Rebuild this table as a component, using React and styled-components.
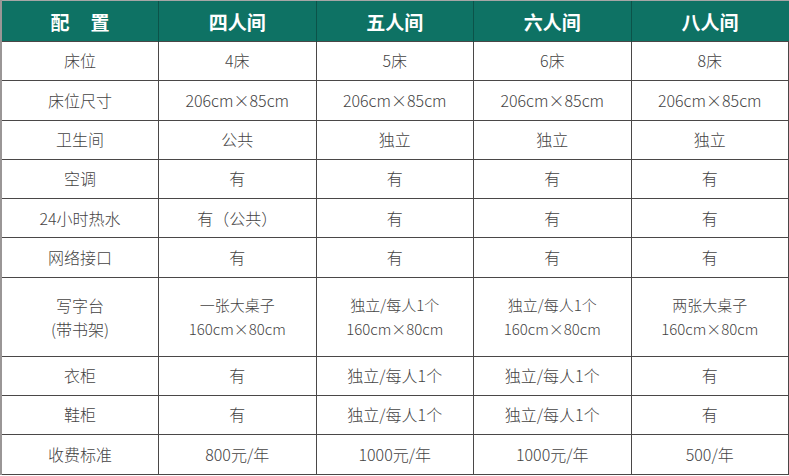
import React from "react";
import styled, { createGlobalStyle } from "styled-components";

const GlobalStyle = createGlobalStyle`
  html, body {
    margin: 0;
    padding: 0;
    background: #ffffff;
  }
  body {
    font-family: "Noto Sans CJK SC", "Noto Sans", sans-serif;
  }
`;

const Table = styled.table`
  width: 789px;
  table-layout: fixed;
  border-collapse: collapse;
  border-left: 2px solid #9a9696;
`;

const HeadCell = styled.th`
  height: 40px;
  padding: 0;
  background: #0e7264;
  color: #ffffff;
  font-size: 19px;
  font-weight: 700;
  text-align: center;
  border-left: 1px solid #0b5349;
  border-top: 1px solid #a6a6a6;
  letter-spacing: ${(p) => (p.$spaced ? "1.1em" : "0")};
  text-indent: ${(p) => (p.$spaced ? "1.1em" : "0")};
`;

const Cell = styled.td`
  height: ${(p) => (p.$tall ? "78px" : "38.3px")};
  padding: 0;
  color: #444343;
  font-size: 16px;
  font-weight: 300;
  line-height: 1.6;
  text-align: center;
  border: 1px solid #4a4747;
  border-left-color: #5a5757;
`;

const Line = styled.span`
  display: block;
  font-size: ${(p) => (p.$small ? "15px" : "16px")};
  line-height: 24px;
`;

const heads = ["配置", "四人间", "五人间", "六人间", "八人间"];

const rows = [
  ["床位", "4床", "5床", "6床", "8床"],
  ["床位尺寸", "206cm×85cm", "206cm×85cm", "206cm×85cm", "206cm×85cm"],
  ["卫生间", "公共", "独立", "独立", "独立"],
  ["空调", "有", "有", "有", "有"],
  ["24小时热水", "有（公共）", "有", "有", "有"],
  ["网络接口", "有", "有", "有", "有"],
  [
    ["写字台", "(带书架)"],
    ["一张大桌子", "160cm×80cm"],
    ["独立/每人1个", "160cm×80cm"],
    ["独立/每人1个", "160cm×80cm"],
    ["两张大桌子", "160cm×80cm"],
  ],
  ["衣柜", "有", "独立/每人1个", "独立/每人1个", "有"],
  ["鞋柜", "有", "独立/每人1个", "独立/每人1个", "有"],
  ["收费标准", "800元/年", "1000元/年", "1000元/年", "500/年"],
];

export default function App() {
  return (
    <>
      <GlobalStyle />
      <Table>
        <thead>
          <tr>
            {heads.map((h, i) => (
              <HeadCell key={h} $spaced={i === 0}>
                {h}
              </HeadCell>
            ))}
          </tr>
        </thead>
        <tbody>
          {rows.map((row, r) => (
            <tr key={r}>
              {row.map((c, i) =>
                Array.isArray(c) ? (
                  <Cell key={i} $tall>
                    <Line $small={i > 0}>{c[0]}</Line>
                    <Line $small={i > 0}>{c[1]}</Line>
                  </Cell>
                ) : (
                  <Cell key={i}>{c}</Cell>
                )
              )}
            </tr>
          ))}
        </tbody>
      </Table>
    </>
  );
}
